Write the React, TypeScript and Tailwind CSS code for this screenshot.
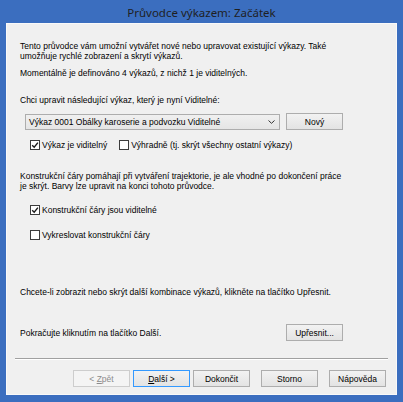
import React from 'react';

const Check = ({ checked }: { checked?: boolean }) => (
  <div className="flex h-[10px] w-[10px] shrink-0 items-center justify-center border border-[#3c3c3c] bg-white">
    {checked && (
      <svg width="8" height="8" viewBox="0 0 8 8">
        <path d="M1.2 4.2 L3.2 6.2 L6.9 1.6" fill="none" stroke="#1a1a1a" strokeWidth="1.4" />
      </svg>
    )}
  </div>
);

const Btn = ({ children, variant = 'normal' }: { children: React.ReactNode; variant?: 'normal' | 'primary' | 'disabled' }) => {
  const styles = {
    normal: 'border-[#adadad] bg-gradient-to-b from-[#f2f2f2] to-[#e3e3e3] text-black',
    primary: 'border-[#3399ff] bg-gradient-to-b from-[#f2f2f2] to-[#e3e3e3] text-black',
    disabled: 'border-[#cdcdcd] bg-[#f4f4f4] text-[#8c8c8c]',
  };
  return (
    <div className={`flex h-[17px] w-[57px] shrink-0 items-center justify-center border ${styles[variant]}`}>
      {children}
    </div>
  );
};

export default function App() {
  return (
    <div className="flex h-[402px] w-[403px] flex-col bg-[#3b6ebf] font-['Liberation_Sans',Arial,sans-serif] text-[8.5px] leading-[10px] text-black">
      {/* title bar */}
      <div className="flex h-[23px] items-center justify-center pt-[2px] font-['Noto_Sans',sans-serif] text-[11.5px] text-[#1f1f1f]">
        Průvodce výkazem: Začátek
      </div>

      {/* client area */}
      <div className="ml-[6px] flex h-[372px] w-[391px] flex-col border border-[#f9f9f9] bg-[#f0f0f0]">
        <div className="flex w-[336px] flex-col pl-[13px] whitespace-nowrap">
          <p className="mt-[17px]">
            Tento průvodce vám umožní vytvářet nové nebo upravovat existující výkazy. Také
            <br />
            umožňuje rychlé zobrazení a skrytí výkazů.
          </p>
          <p className="mt-[7px]">Momentálně je definováno 4 výkazů, z nichž 1 je viditelných.</p>
          <p className="mt-[17px]">Chci upravit následující výkaz, který je nyní Viditelné:</p>

          <div className="mt-[8px] flex h-[17px] items-center justify-between">
            <div className="ml-[5px] flex h-[16px] w-[255px] items-center justify-between border border-[#adadad] bg-gradient-to-b from-[#f0f0f0] to-[#e5e5e5] pl-[3px] pr-[4px]">
              <span>Výkaz 0001 Obálky karoserie a podvozku Viditelné</span>
              <svg width="7" height="4" viewBox="0 0 7 4">
                <path d="M0.5 0.5 L3.5 3.3 L6.5 0.5" fill="none" stroke="#333" strokeWidth="1" />
              </svg>
            </div>
            <Btn>Nový</Btn>
          </div>

          <div className="mt-[10px] flex h-[10px] items-center">
            <div className="ml-[10px] flex items-center gap-[2px]">
              <Check checked />
              <span>Výkaz je viditelný</span>
            </div>
            <div className="ml-[12px] flex items-center gap-[2px]">
              <Check />
              <span>Výhradně (tj. skrýt všechny ostatní výkazy)</span>
            </div>
          </div>

          <p className="mt-[21px]">
            Konstrukční čáry pomáhají při vytváření trajektorie, je ale vhodné po dokončení práce
            <br />
            je skrýt. Barvy lze upravit na konci tohoto průvodce.
          </p>

          <div className="ml-[10px] mt-[14px] flex h-[10px] items-center gap-[2px]">
            <Check checked />
            <span>Konstrukční čáry jsou viditelné</span>
          </div>
          <div className="ml-[10px] mt-[15px] flex h-[10px] items-center gap-[2px]">
            <Check />
            <span>Vykreslovat konstrukční čáry</span>
          </div>

          <p className="mt-[47px]">Chcete-li zobrazit nebo skrýt další kombinace výkazů, klikněte na tlačítko Upřesnit.</p>

          <div className="mt-[27px] flex h-[17px] items-center justify-between">
            <span>Pokračujte kliknutím na tlačítko Další.</span>
            <Btn>Upřesnit...</Btn>
          </div>
        </div>

        {/* separator */}
        <div className="ml-[8px] mr-[8px] mt-[17px] h-px bg-[#a0a0a0]" />
        <div className="ml-[8px] mr-[8px] h-px bg-white" />

        <div className="mt-[10px] flex pl-[66px]">
          <Btn variant="disabled">
            &lt;&nbsp;<span className="underline">Z</span>pět
          </Btn>
          <div className="ml-[3px]">
            <Btn variant="primary">
              <span className="underline">D</span>alší&nbsp;&gt;
            </Btn>
          </div>
          <div className="ml-[3px]">
            <Btn>Dokončit</Btn>
          </div>
          <div className="ml-[11px]">
            <Btn>Storno</Btn>
          </div>
          <div className="ml-[11px]">
            <Btn>Nápověda</Btn>
          </div>
        </div>
      </div>
    </div>
  );
}
